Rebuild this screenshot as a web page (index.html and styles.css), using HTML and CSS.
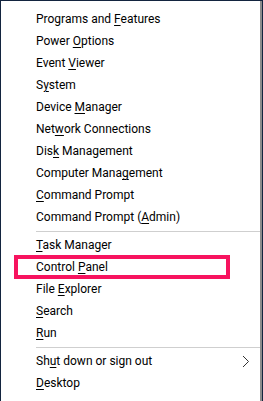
FILE: index.html
```html
<!DOCTYPE html>
<html>
<head>
<meta charset="utf-8">
<link rel="stylesheet" href="styles.css">
</head>
<body>
<div class="menu">
  <div class="item">Programs and <u>F</u>eatures</div>
  <div class="item">Power <u>O</u>ptions</div>
  <div class="item">Event <u>V</u>iewer</div>
  <div class="item">S<u>y</u>stem</div>
  <div class="item">Device <u>M</u>anager</div>
  <div class="item">Net<u>w</u>ork Connections</div>
  <div class="item">Dis<u>k</u> Management</div>
  <div class="item">Computer Mana<u>g</u>ement</div>
  <div class="item"><u>C</u>ommand Prompt</div>
  <div class="item">Command Prompt (<u>A</u>dmin)</div>
  <div class="sep"></div>
  <div class="item"><u>T</u>ask Manager</div>
  <div class="item highlighted">Control <u>P</u>anel<span class="mark"></span></div>
  <div class="item">File <u>E</u>xplorer</div>
  <div class="item"><u>S</u>earch</div>
  <div class="item"><u>R</u>un</div>
  <div class="sep"></div>
  <div class="item">Sh<u>u</u>t down or sign out
    <svg class="chev" width="8" height="13" viewBox="0 0 8 13"><path d="M1 1 L6.5 6.5 L1 12" fill="none" stroke="#333" stroke-width="1"/></svg>
  </div>
  <div class="item"><u>D</u>esktop</div>
</div>
</body>
</html>
```
FILE: styles.css
```css
html, body {
  margin: 0;
  padding: 0;
}
body {
  background: #13243f;
  width: 263px;
  height: 401px;
  overflow: hidden;
  padding: 1px 0 0 1px;
  box-sizing: border-box;
}
.menu {
  width: 259px;
  height: 397px;
  background: #fff;
  border-right: 2px solid #8c8c8c;
  border-bottom: 2px solid #8c8c8c;
  padding-top: 7px;
  font-family: Roboto, "Noto Sans", sans-serif;
  font-size: 12px;
  color: #000;
}
.item {
  position: relative;
  height: 22px;
  line-height: 23px;
  padding-left: 35px;
  white-space: nowrap;
}
.item u {
  text-underline-offset: 2px;
}
.sep {
  height: 6px;
  display: flex;
  align-items: center;
  padding-left: 35px;
}
.sep::after {
  content: "";
  display: block;
  flex: 1;
  height: 1px;
  background: #cfcfcf;
}
.mark {
  position: absolute;
  left: 13px;
  top: -1px;
  width: 208px;
  height: 16px;
  border: 4px solid #f7135f;
}
.chev {
  position: absolute;
  left: 241px;
  top: 5px;
}
```
